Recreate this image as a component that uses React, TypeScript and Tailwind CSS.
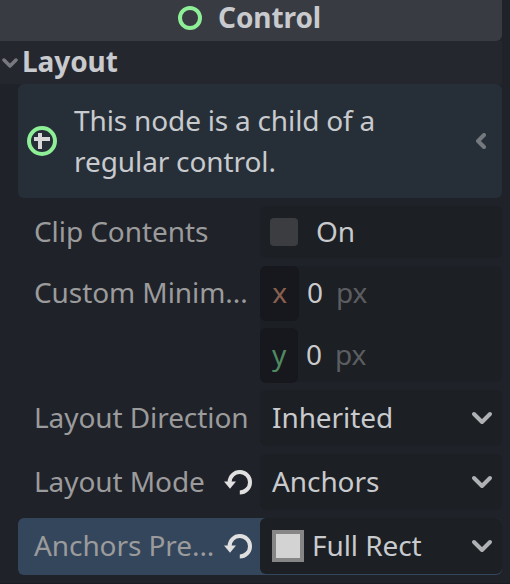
import React from "react";

const CaretDown = () => (
  <svg className="h-5 w-6 shrink-0" viewBox="0 0 24 20" fill="none" stroke="#b0b1b4" strokeWidth="4" strokeLinecap="round" strokeLinejoin="round">
    <path d="M4 6 L12 14 L20 6" />
  </svg>
);

const Revert = () => (
  <svg className="h-7 w-7 shrink-0" viewBox="0 0 28 28">
    <path d="M5.6 14 A10.2 10.2 0 1 1 15.8 24.5" fill="none" stroke="#e0e0e0" strokeWidth="4" />
    <path d="M0 13.5 H12 L6 20.7 Z" fill="#e0e0e0" />
  </svg>
);

function Label({ text, revert = false }: { text: string; revert?: boolean }) {
  return (
    <div className="flex w-[242px] shrink-0 items-center justify-between pl-4 pr-2 text-[#9b9b9c]">
      <span className="-mt-0.5">{text}</span>
      {revert && <Revert />}
    </div>
  );
}

function Axis({ name, color, width }: { name: string; color: string; width: string }) {
  return (
    <div className="flex h-[55px] items-center">
      <div className={`flex h-[55px] items-center justify-center rounded-md bg-[#17181d] ${width} ${color}`}>
        <span className="-mt-0.5">{name}</span>
      </div>
      <span className="-mt-0.5 ml-2">0</span>
      <span className="-mt-0.5 ml-[13px] text-[#5b5d61]">px</span>
    </div>
  );
}

function Select({ text, icon = false }: { text: string; icon?: boolean }) {
  return (
    <div className="flex h-14 w-[242px] items-center rounded-md bg-[#1c1f23] pl-3 pr-2">
      {icon && <span className="mr-2 h-8 w-8 shrink-0 border-4 border-[#868686] bg-[#d3d3d3]" />}
      <span className="-mt-0.5 flex-1">{text}</span>
      <CaretDown />
    </div>
  );
}

export default function App() {
  return (
    <div className="h-[584px] w-[510px] overflow-hidden whitespace-nowrap border-b border-[#191b20] bg-[#1f2229] pr-2 font-['Noto_Sans',sans-serif] text-[28px] leading-[41px] tracking-[-0.08px] text-[#c8cacd]">
      <div className="flex h-[41px] items-start rounded-br-md bg-[#393b43] pl-[178px] font-bold">
        <svg className="mt-1.5 h-6 w-6" viewBox="0 0 24 24">
          <circle cx="12" cy="12" r="10" fill="none" stroke="#8eef97" strokeWidth="4" />
        </svg>
        <span className="ml-4 leading-[35px]">Control</span>
      </div>
      <div className="flex h-[43px] items-center bg-[#25272f] font-bold">
        <svg className="ml-0.5 h-4 w-4" viewBox="0 0 16 16" fill="none" stroke="#77797e" strokeWidth="3.5" strokeLinecap="round" strokeLinejoin="round">
          <path d="M2 5 L8 11 L14 5" />
        </svg>
        <span className="-mt-0.5 ml-1">Layout</span>
      </div>
      <div className="ml-[18px]">
        <div className="flex h-[114px] items-center rounded-md bg-[#262f38] pl-[9px] pr-4">
          <svg className="h-[30px] w-[30px] shrink-0" viewBox="0 0 30 30">
            <circle cx="15" cy="15" r="13" fill="none" stroke="#8eef97" strokeWidth="4" />
            <path d="M11 7h4v4h8v4h-8v8h-4v-8H7v-4h4z" fill="#d8d8d8" />
          </svg>
          <p className="ml-[17px] flex-1 [word-spacing:-0.4px]">This node is a child of a<br />regular control.</p>
          <svg className="h-4 w-2.5 shrink-0" viewBox="0 0 10 16" fill="none" stroke="#73797f" strokeWidth="4" strokeLinecap="round" strokeLinejoin="round">
            <path d="M8 2 L2 8 L8 14" />
          </svg>
        </div>
        <div className="mt-2 flex h-[52px]">
          <Label text="Clip Contents" />
          <div className="flex w-[242px] items-center rounded-md bg-[#1c1f23] pl-2.5">
            <span className="h-7 w-7 rounded bg-[#3b3d41]" />
            <span className="-mt-0.5 ml-[18px]">On</span>
          </div>
        </div>
        <div className="mt-2 flex h-[116px]">
          <div className="flex h-[55px]"><Label text="Custom Minim..." /></div>
          <div className="flex w-[242px] flex-col gap-[7px] rounded-md bg-[#1c1f23]">
            <Axis name="x" color="text-[#895f50]" width="w-[39px]" />
            <Axis name="y" color="text-[#508a62]" width="w-[38px]" />
          </div>
        </div>
        <div className="mt-2 flex h-14"><Label text="Layout Direction" /><Select text="Inherited" /></div>
        <div className="mt-2 flex h-14"><Label text="Layout Mode" revert /><Select text="Anchors" /></div>
        <div className="mt-2 flex h-[57px] rounded-md bg-[#34465c] pb-px"><Label text="Anchors Pre..." revert /><Select text="Full Rect" icon /></div>
      </div>
    </div>
  );
}
